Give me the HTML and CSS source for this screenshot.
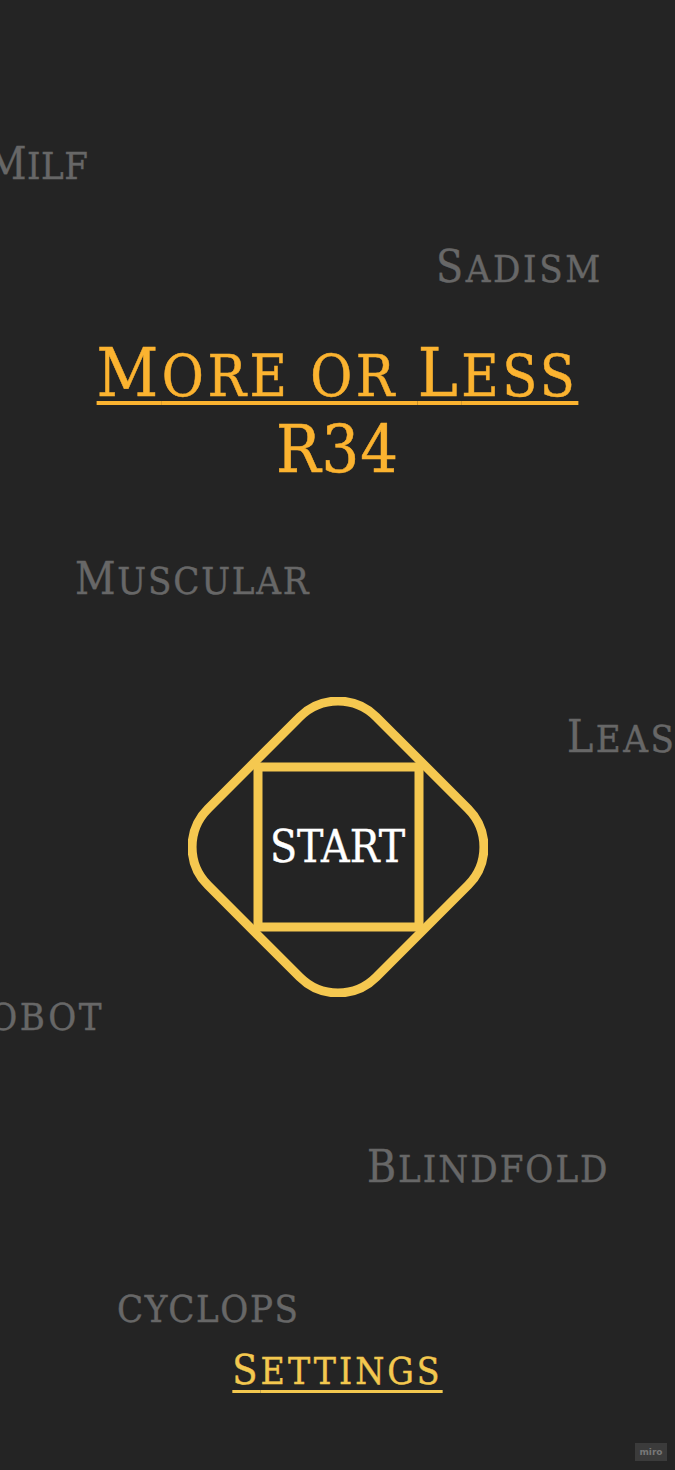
FILE: index.html
```html
<!DOCTYPE html>
<html lang="en">
<head>
<meta charset="utf-8">
<title>More or Less R34</title>
<link rel="stylesheet" href="styles.css">
</head>
<body>
<main class="screen">
  <div class="words" aria-hidden="true">
    <span class="word w-milf"><span class="cap">M</span>ilf</span>
    <span class="word w-sadism"><span class="cap">S</span>adism</span>
    <span class="word w-muscular"><span class="cap">M</span>uscular</span>
    <span class="word w-leash"><span class="cap">L</span>eash</span>
    <span class="word w-robot"><span class="cap">R</span>obot</span>
    <span class="word w-blindfold"><span class="cap">B</span>lindfold</span>
    <span class="word w-cyclops">cyclops</span>
  </div>

  <header class="title">
    <h1 class="title-main"><span class="cap">M</span>ore or <span class="cap">L</span>ess</h1>
    <div class="title-sub">R34</div>
  </header>

  <button class="start" type="button">
    <svg class="start-shape" viewBox="0 0 300 300" width="300" height="300" aria-hidden="true">
      <rect x="31" y="31" width="238" height="238" rx="54" ry="54" transform="rotate(45 150 150)" fill="none" stroke="#f5c850" stroke-width="9"/>
      <rect x="70" y="70" width="161" height="160" fill="none" stroke="#f5c850" stroke-width="9"/>
    </svg>
    <span class="start-label">START</span>
  </button>

  <a class="settings" href="#"><span class="cap">S</span>ettings</a>

  <div class="miro">miro</div>
</main>
</body>
</html>
```

FILE: styles.css
```css
* { box-sizing: border-box; }

html, body {
  margin: 0;
  padding: 0;
  background: #242424;
}

body {
  font-family: "DejaVu Serif", "Liberation Serif", serif;
  font-stretch: condensed;
}

.screen {
  position: relative;
  width: 675px;
  height: 1470px;
  overflow: hidden;
  display: flex;
  flex-direction: column;
  align-items: center;
  padding-top: 340px;
}

/* floating background words */
.words {
  position: absolute;
  inset: 0;
}

.word {
  position: absolute;
  white-space: nowrap;
  color: #676767;
  font-size: 38px;
  line-height: 1;
  letter-spacing: 2.5px;
  text-transform: uppercase;
  -webkit-text-stroke: 0.4px #676767;
}

.word .cap { font-size: 44px; }

.w-milf { left: -14px; top: 142px; letter-spacing: 0.5px; }
.w-sadism { left: 436px; top: 245px; letter-spacing: 2.6px; }
.w-muscular { left: 75px; top: 557px; letter-spacing: 1.8px; }
.w-leash { left: 567px; top: 715px; }
.w-robot { right: 571px; top: 993px; }
.w-blindfold { left: 367px; top: 1145px; letter-spacing: 2px; }
.w-cyclops { left: 117px; top: 1290px; letter-spacing: 1.6px; }

/* title */
.title {
  position: relative;
  display: flex;
  flex-direction: column;
  align-items: center;
}

.title-main {
  margin: 0;
  font-weight: normal;
  font-size: 57px;
  line-height: 67px;
  letter-spacing: 3.5px;
  color: #fbb330;
  -webkit-text-stroke: 0.5px #fbb330;
  text-transform: uppercase;
  text-decoration: underline;
  text-decoration-thickness: 4px;
  text-underline-offset: 5px;
  white-space: nowrap;
}

.title-main .cap { font-size: 67px; }

.title-sub {
  margin-top: 7px;
  font-size: 66px;
  line-height: 1;
  letter-spacing: 1px;
  color: #fbb330;
  -webkit-text-stroke: 0.5px #fbb330;
}

/* start button */
.start {
  position: relative;
  margin-top: 214px;
  width: 300px;
  height: 300px;
  padding: 0;
  border: 0;
  background: none;
  display: grid;
  place-items: center;
  cursor: pointer;
  font-family: inherit;
  font-stretch: condensed;
}

.start-shape,
.start-label { grid-area: 1 / 1; }

.start-shape { display: block; }

.start-label {
  color: #ffffff;
  font-size: 44px;
  line-height: 1;
  -webkit-text-stroke: 0.4px #ffffff;
}

/* settings */
.settings {
  position: relative;
  margin-top: 353px;
  color: #f3c84f;
  -webkit-text-stroke: 0.4px #f3c84f;
  font-size: 37px;
  line-height: 41px;
  letter-spacing: 3px;
  text-transform: uppercase;
  text-decoration: underline;
  text-decoration-thickness: 3px;
  text-underline-offset: 6px;
  white-space: nowrap;
}

.settings .cap { font-size: 41px; }

.miro {
  position: absolute;
  left: 635px;
  top: 1443px;
  width: 32px;
  height: 18px;
  background: #3b3b3b;
  color: #777777;
  font-family: "DejaVu Sans", sans-serif;
  font-stretch: normal;
  font-size: 9px;
  font-weight: bold;
  line-height: 18px;
  text-align: center;
}
```
